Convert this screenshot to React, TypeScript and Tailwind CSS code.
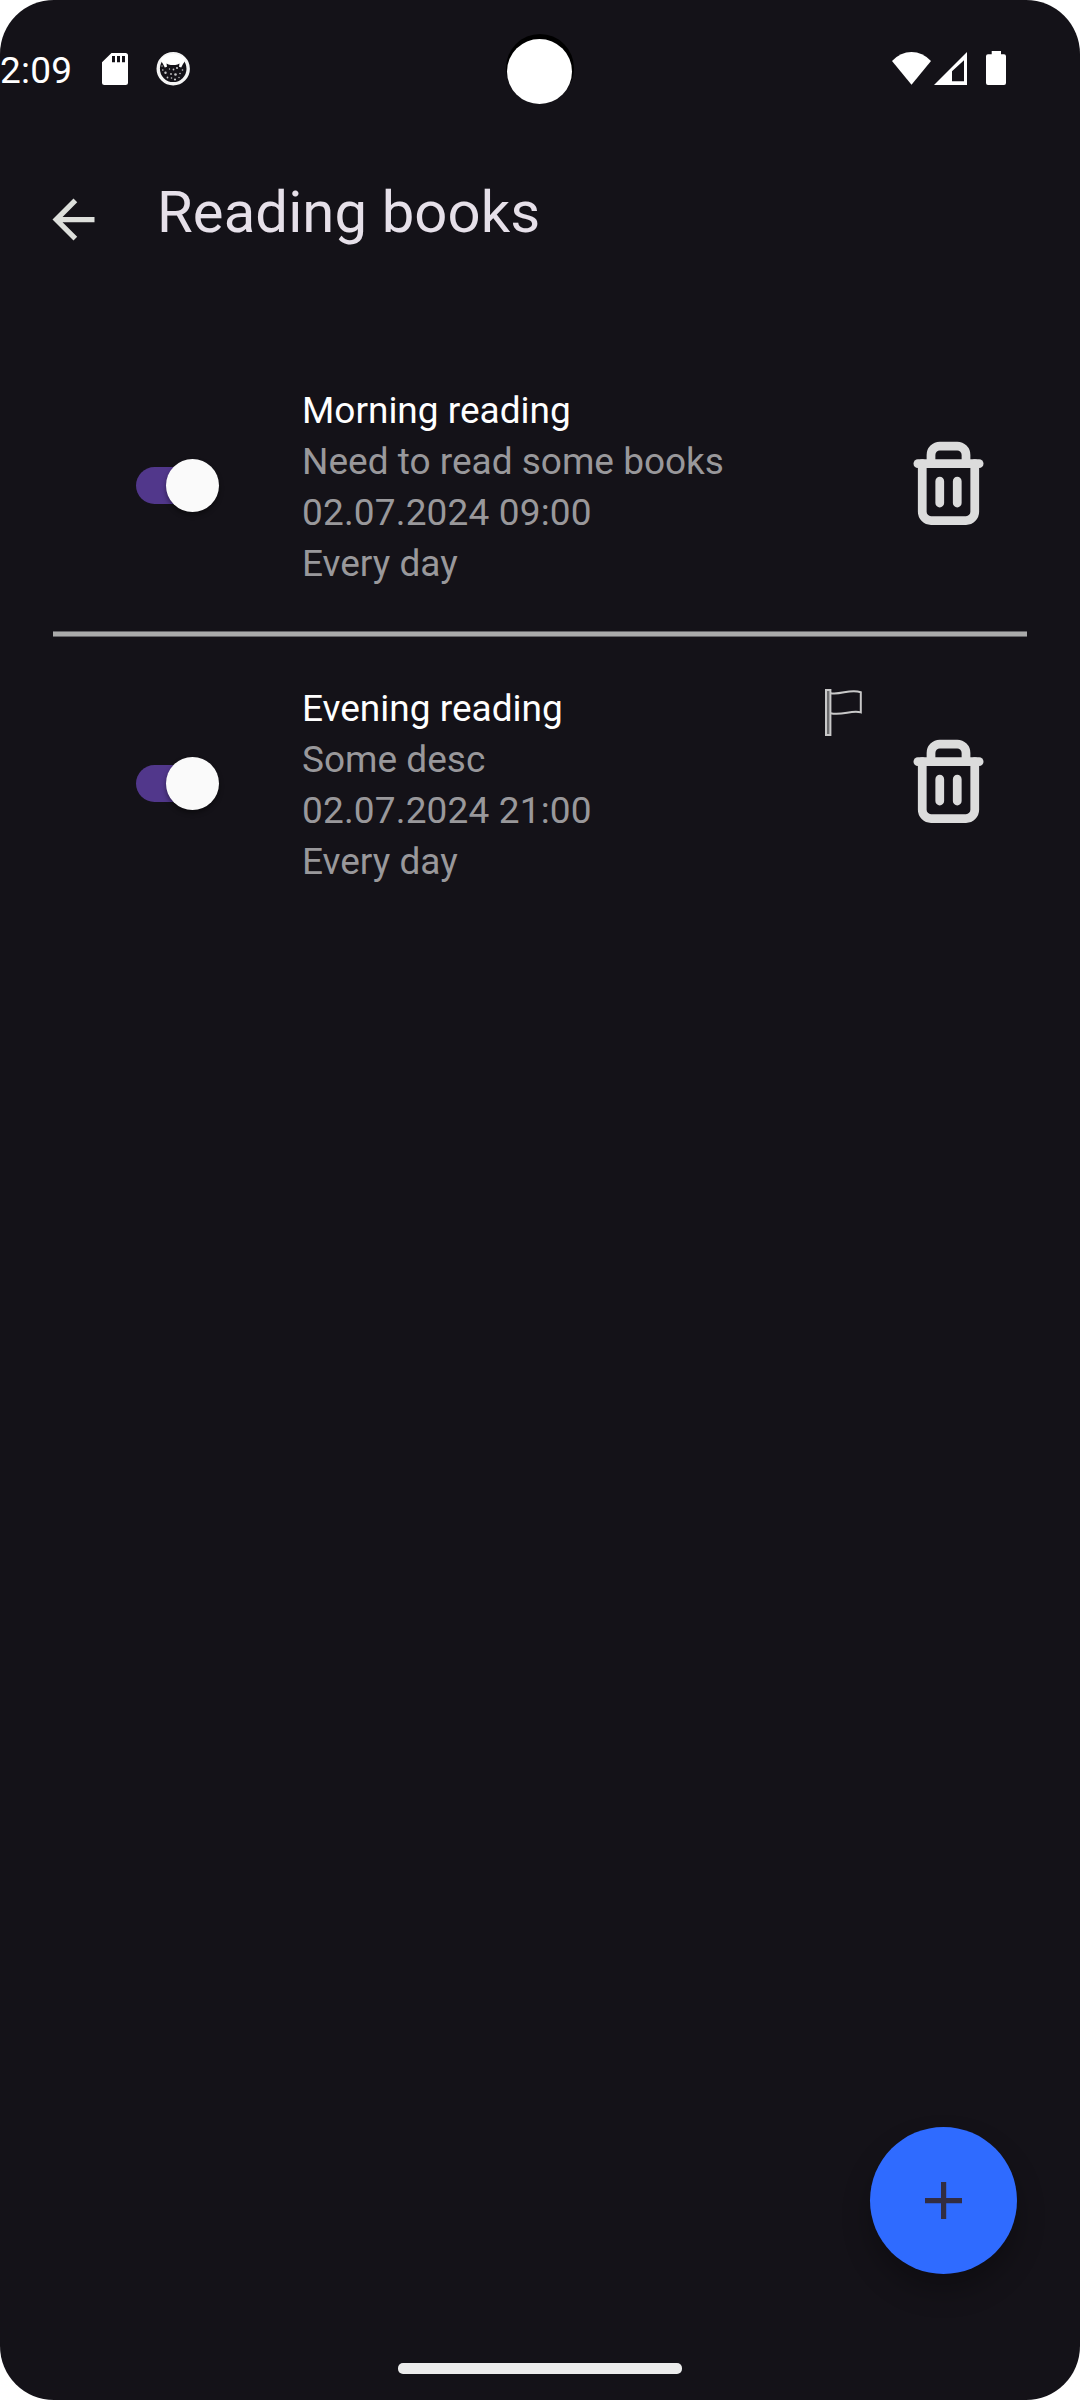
import React from "react";

type Reminder = {
  title: string;
  description: string;
  date: string;
  repeat: string;
  flagged?: boolean;
};

const reminders: Reminder[] = [
  {
    title: "Morning reading",
    description: "Need to read some books",
    date: "02.07.2024 09:00",
    repeat: "Every day",
  },
  {
    title: "Evening reading",
    description: "Some desc",
    date: "02.07.2024 21:00",
    repeat: "Every day",
    flagged: true,
  },
];

function SdCardIcon() {
  return (
    <svg className="mt-0.5 h-8 w-[26px]" viewBox="0 0 26 32">
      <path
        fillRule="evenodd"
        fill="#fff"
        d="M9.5 0H23.5Q26 0 26 2.5V29.5Q26 32 23.5 32H2.5Q0 32 0 29.5V9.3ZM10 3V9.3H13V3ZM15 3V9.3H18V3ZM20 3V9.3H23V3Z"
      />
    </svg>
  );
}

function CatIcon() {
  return (
    <svg className="mt-0.5 h-[34px] w-[34px]" viewBox="0 0 34 34">
      <circle cx="17.2" cy="16.8" r="15" fill="none" stroke="#f4f4f4" strokeWidth="3.4" />
      <path
        fill="#fff"
        d="M5 6.5Q10 2 17 2Q24 2 29.4 6.5L28.4 10L27 12L25.2 15.5L23 14.8L23.5 11.5L21.5 12.4Q17 13.6 12.5 12.4L10.5 11.5L11 14.8L8.8 15.5L7 12L5.8 10Z"
      />
      <g fill="#c4c4c6">
        <circle cx="6" cy="14" r=".7" />
        <circle cx="6.8" cy="18" r=".8" />
        <circle cx="9.5" cy="20.8" r="1.2" />
        <circle cx="13.5" cy="17" r=".7" />
        <circle cx="17.5" cy="17.5" r=".9" />
        <circle cx="21" cy="16" r="1.1" />
        <circle cx="26.5" cy="18" r=".8" />
        <circle cx="15" cy="22" r=".9" />
        <circle cx="19.5" cy="22.5" r="1.3" />
        <circle cx="24" cy="21.5" r=".8" />
        <circle cx="11.5" cy="25.5" r=".9" />
        <circle cx="15.5" cy="26" r=".8" />
        <circle cx="19" cy="27.5" r="1.1" />
        <circle cx="23" cy="25.5" r=".7" />
      </g>
    </svg>
  );
}

function WifiIcon() {
  return (
    <svg className="h-[33px] w-[39px]" viewBox="0 0 39 33">
      <path fill="#fff" d="M0 9Q8.5 0 19.5 0Q30.5 0 39 9L19.5 32.8Z" />
    </svg>
  );
}

function SignalIcon() {
  return (
    <svg className="ml-[3px] h-[33px] w-[33px]" viewBox="0 0 33 33">
      <path fillRule="evenodd" fill="#fff" d="M33 0V33H0ZM30 8.2L18 19.2V29.3H30Z" />
    </svg>
  );
}

function BatteryIcon() {
  return (
    <svg className="ml-[19px] h-[34px] w-5" viewBox="0 0 20 34">
      <path
        fill="#fff"
        d="M5.7 0H15V3.2H18Q20 3.2 20 5.2V32Q20 34 18 34H2Q0 34 0 32V5.2Q0 3.2 2 3.2H5.7Z"
      />
    </svg>
  );
}

function BackIcon() {
  return (
    <svg className="h-[63px] w-[63px]" viewBox="0 0 24 24" fill="#dddfdb">
      <path d="M20 11H7.83l5.59-5.59L12 4l-8 8 8 8 1.41-1.41L7.83 13H20v-2z" />
    </svg>
  );
}

function TrashIcon() {
  return (
    <svg
      className="h-[105px] w-[105px]"
      viewBox="0 0 24 24"
      fill="none"
      stroke="#dcdcdc"
      strokeWidth="2"
      strokeLinecap="round"
    >
      <path d="M5 7h14" />
      <path d="M6 7v11a2 2 0 0 0 2 2h8a2 2 0 0 0 2-2V7" />
      <path d="M8 7V5a2 2 0 0 1 2-2h4a2 2 0 0 1 2 2v2" />
      <path d="M10 11v5M14 11v5" />
    </svg>
  );
}

function FlagIcon() {
  return (
    <svg className="h-[47px] w-[37px]" viewBox="0 0 37 47" fill="none" stroke="#c8c8c8" strokeWidth="2">
      <rect x="1" y="1" width="4.4" height="45" fill="#6c6c6e" />
      <path d="M5.5 4.2C16 6.2 25 -.5 35.8 3.3V23.4C27 20.6 17 27 5.5 24.2" />
    </svg>
  );
}

function Toggle() {
  return (
    <button role="switch" aria-checked="true" className="flex h-[53px] w-[83px] items-center">
      <span className="h-[37px] w-[78px] rounded-full bg-[#51378b]" />
      <span className="-ml-12 size-[53px] shrink-0 rounded-full bg-[#fafafa] shadow-[0_3px_5px_rgba(0,0,0,0.4)]" />
    </button>
  );
}

function ReminderRow({ item, divider }: { item: Reminder; divider: boolean }) {
  return (
    <li className="px-[53px]">
      <div className="flex h-[292px] items-center pr-[26px] pl-[83px]">
        <Toggle />
        <div className="mt-1 ml-[83px] w-[523px] text-[37px] leading-[51px] text-[#99989b]">
          <p className="text-white">{item.title}</p>
          <p>{item.description}</p>
          <p className="tracking-[0.16px]">{item.date}</p>
          <p>{item.repeat}</p>
        </div>
        <div className="mb-[104px] h-[94px] w-[37px] shrink-0 pt-[5px]">{item.flagged && <FlagIcon />}</div>
        <button aria-label="Delete" className="ml-auto shrink-0">
          <TrashIcon />
        </button>
      </div>
      {divider && <div className="h-1.5 border-y border-[#656468] bg-[#aaaaaa]" />}
    </li>
  );
}

export default function App() {
  return (
    <div className="h-[2400px] w-[1080px] bg-white font-['Roboto',sans-serif]">
      <div className="relative flex h-full w-full flex-col overflow-hidden rounded-[54px] bg-[#141218]">
        <div className="flex h-[136px] items-center justify-between pr-[74px]">
          <div className="flex items-center">
            <span className="mt-1 w-[102px] text-[37px] leading-[51px] tracking-[0.2px] text-white">2:09</span>
            <SdCardIcon />
            <span className="ml-7">
              <CatIcon />
            </span>
          </div>
          <div className="flex items-center">
            <WifiIcon />
            <SignalIcon />
            <BatteryIcon />
          </div>
        </div>
        {/* Camera cutout sits over the status bar */}
        <div className="absolute top-[34px] left-[506px] size-[68px] rounded-full bg-black">
          <div className="mt-[5px] ml-px size-[65px] rounded-full bg-white" />
        </div>

        <header className="flex h-[203px] items-start pl-[42px]">
          <button aria-label="Back" className="mt-[52px]">
            <BackIcon />
          </button>
          <h1 className="mt-[41px] ml-[52px] text-[58px] leading-[70px] tracking-[0.1px] text-[#e6e0e9]">
            Reading books
          </h1>
        </header>

        <ul className="flex-1">
          {reminders.map((item, i) => (
            <ReminderRow key={item.title} item={item} divider={i < reminders.length - 1} />
          ))}
        </ul>

        <button
          aria-label="Add reminder"
          className="absolute top-[2127px] left-[870px] flex size-[147px] items-center justify-center rounded-full bg-[#2f6bff] shadow-[0_16px_28px_rgba(0,0,0,0.28)]"
        >
          <svg className="size-[37px]" viewBox="0 0 37 37" fill="#322d42">
            <path d="M16 0h5.2v16H37v5.2H21.2V37H16V21.2H0V16h16z" />
          </svg>
        </button>

        <div className="mb-[26px] ml-[398px] h-[11px] w-[284px] rounded-[5px] bg-[#ececec]" />
      </div>
    </div>
  );
}
